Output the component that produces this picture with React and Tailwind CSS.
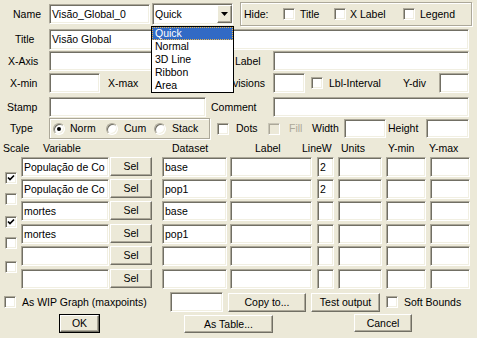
import React from "react";

const insetCls =
  "bg-white border border-t-[#aca899] border-l-[#aca899] border-b-white border-r-white shadow-[inset_1px_1px_0_#716f64,inset_-1px_-1px_0_#f1efe2] flex items-center pl-[2px] overflow-hidden whitespace-nowrap shrink-0";
const btnCls =
  "bg-[#ece9d8] border border-t-white border-l-white border-b-[#716f64] border-r-[#716f64] shadow-[inset_-1px_-1px_0_#aca899] flex items-center justify-center whitespace-nowrap shrink-0";

function Input({ className = "", children }) {
  return <div className={`${insetCls} ${className}`}>{children}</div>;
}

function Btn({ className = "", children }) {
  return <div className={`${btnCls} ${className}`}>{children}</div>;
}

function Check({ checked = false, disabled = false, className = "" }) {
  return (
    <div
      className={`w-[12px] h-[12px] shrink-0 border flex items-center justify-center ${
        disabled
          ? "bg-[#ece9d8] border-t-[#c9c6b7] border-l-[#c9c6b7] border-b-white border-r-white shadow-[inset_1px_1px_0_#aca899]"
          : "bg-white border-t-[#aca899] border-l-[#aca899] border-b-white border-r-white shadow-[inset_1px_1px_0_#716f64,inset_-1px_-1px_0_#f1efe2]"
      } ${className}`}
    >
      {checked && (
        <svg width="8" height="8" viewBox="0 0 8 8">
          <path d="M1 3.5 L3 5.6 L7 1.5" stroke="#000" strokeWidth="1.7" fill="none" />
        </svg>
      )}
    </div>
  );
}

function Radio({ checked = false, className = "" }) {
  return (
    <div
      className={`w-[12px] h-[12px] shrink-0 rounded-full border border-t-[#aca899] border-l-[#aca899] border-b-white border-r-white shadow-[inset_1px_1px_0_#716f64,inset_-1px_-1px_0_#f1efe2] bg-white flex items-center justify-center ${className}`}
    >
      {checked && <div className="w-[4px] h-[4px] rounded-full bg-black" />}
    </div>
  );
}

const groupCls =
  "border border-[#aca899] shadow-[inset_1px_1px_0_#ffffff,1px_1px_0_#ffffff] shrink-0";

const rows = [
  { v: "População de Co", d: "base", w: "2" },
  { v: "População de Co", d: "pop1", w: "2" },
  { v: "mortes", d: "base", w: "" },
  { v: "mortes", d: "pop1", w: "" },
  { v: "", d: "", w: "" },
  { v: "", d: "", w: "" },
];
const rowMt = ["mt-0", "mt-[2px]", "mt-[2px]", "mt-[3px]", "mt-[2px]", "mt-[3px]"];

export default function App() {
  return (
    <div className="relative w-[477px] h-[338px] overflow-hidden bg-[#ece9d8] text-black text-[10.5px] leading-[13px] font-['Liberation_Sans',Arial,sans-serif]">
      {/* Row A: Name */}
      <div className="flex items-center h-[24px] mt-[2px]">
        <div className="w-[49px] pl-[13px] shrink-0">Name</div>
        <Input className="w-[101px] h-[20px]">Visão_Global_0</Input>
        <div className={`${insetCls} ml-[2px] w-[81px] h-[22px] justify-between pr-0 pl-[2px]`}>
          <span>Quick</span>
          <Btn className="w-[15px] h-[18px]">
            <svg width="7" height="4" viewBox="0 0 7 4">
              <path d="M0 0 H7 L3.5 4 Z" fill="#000" />
            </svg>
          </Btn>
        </div>
        <div className={`${groupCls} ml-[7px] w-[232px] h-[24px] flex items-center`}>
          <div className="w-[42px] pl-[3px] shrink-0">Hide:</div>
          <Check />
          <div className="w-[39px] pl-[5px] shrink-0">Title</div>
          <Check />
          <div className="w-[57px] pl-[4px] shrink-0">X Label</div>
          <Check />
          <div className="pl-[5px]">Legend</div>
        </div>
      </div>

      {/* Row B: Title */}
      <div className="flex items-center h-[21px] mt-[3px]">
        <div className="w-[49px] pl-[15px] shrink-0">Title</div>
        <Input className="w-[420px] h-[21px]">Visão Global</Input>
      </div>

      {/* Row C: X-Axis */}
      <div className="flex items-center h-[20px] mt-[1px]">
        <div className="w-[49px] pl-[8px] shrink-0">X-Axis</div>
        <Input className="w-[171px] h-[20px]" />
        <div className="w-[53px] pl-[5px] shrink-0 whitespace-nowrap">X Label</div>
        <Input className="w-[196px] h-[20px]" />
      </div>

      {/* Row D: X-min */}
      <div className="flex items-center h-[20px] mt-[2px]">
        <div className="w-[49px] pl-[10px] shrink-0">X-min</div>
        <Input className="w-[51px] h-[20px]" />
        <div className="w-[52px] pl-[8px] shrink-0">X-max</div>
        <Input className="w-[53px] h-[20px]" />
        <div className="w-[68px] pr-[8px] text-right shrink-0 whitespace-nowrap">Y-divisions</div>
        <Input className="w-[32px] h-[20px]" />
        <Check className="ml-[6px]" />
        <div className="w-[80px] pl-[6px] shrink-0">Lbl-Interval</div>
        <div className="w-[36px] shrink-0">Y-div</div>
        <Input className="w-[30px] h-[20px]" />
      </div>

      {/* Row E: Stamp */}
      <div className="flex items-center h-[20px] mt-[4px]">
        <div className="w-[49px] pl-[7px] shrink-0">Stamp</div>
        <Input className="w-[157px] h-[20px]" />
        <div className="w-[67px] pl-[5px] shrink-0">Comment</div>
        <Input className="w-[196px] h-[20px]" />
      </div>

      {/* Row F: Type */}
      <div className="flex items-center h-[21px] mt-[1px]">
        <div className="w-[49px] pl-[10px] shrink-0">Type</div>
        <div className={`${groupCls} w-[161px] h-[21px] flex items-center`}>
          <Radio checked className="ml-[3px]" />
          <div className="w-[41px] pl-[5px] shrink-0">Norm</div>
          <Radio />
          <div className="w-[36px] pl-[6px] shrink-0">Cum</div>
          <Radio />
          <div className="pl-[6px]">Stack</div>
        </div>
        <Check className="ml-[7px]" />
        <div className="w-[39px] pl-[7px] shrink-0">Dots</div>
        <Check disabled />
        <div className="w-[32px] pl-[9px] shrink-0 text-[#aca899]">Fill</div>
        <div className="w-[32px] shrink-0">Width</div>
        <Input className="w-[42px] h-[19px]" />
        <div className="w-[40px] pl-[2px] shrink-0">Height</div>
        <Input className="w-[43px] h-[19px]" />
      </div>

      {/* Header */}
      <div className="flex items-center h-[18px]">
        <div className="w-[43px] pl-[3px] shrink-0">Scale</div>
        <div className="w-[129px] shrink-0">Variable</div>
        <div className="w-[83px] shrink-0">Dataset</div>
        <div className="w-[47px] shrink-0">Label</div>
        <div className="w-[39px] shrink-0">LineW</div>
        <div className="w-[47px] shrink-0">Units</div>
        <div className="w-[41px] shrink-0">Y-min</div>
        <div className="shrink-0">Y-max</div>
      </div>

      {/* Rows */}
      <div className="flex">
        <div className="w-[21px] flex flex-col shrink-0">
          <Check checked className="ml-[5px] mt-[15px]" />
          <Check className="ml-[5px] mt-[9px]" />
          <Check checked className="ml-[5px] mt-[11px]" />
          <Check className="ml-[5px] mt-[9px]" />
          <Check className="ml-[5px] mt-[12px]" />
        </div>
        <div className="flex flex-col">
          {rows.map((r, i) => (
            <div key={i} className={`flex items-start h-[20px] ${rowMt[i]}`}>
              <Input className="w-[88px] h-[20px]">{r.v}</Input>
              <Btn className="ml-[1px] w-[42px] h-[19px]">Sel</Btn>
              <Input className="ml-[10px] w-[65px] h-[20px]">{r.d}</Input>
              <Input className="ml-[3px] w-[82px] h-[20px]" />
              <Input className="ml-[5px] w-[17px] h-[20px]">{r.w}</Input>
              <Input className="ml-[4px] w-[44px] h-[20px]" />
              <Input className="ml-[4px] w-[40px] h-[20px]" />
              <Input className="ml-[4px] w-[40px] h-[20px]" />
            </div>
          ))}
        </div>
      </div>

      {/* WIP row */}
      <div className="flex items-center h-[20px] mt-[3px]">
        <Check className="ml-[4px]" />
        <div className="w-[154px] pl-[6px] shrink-0">As WIP Graph (maxpoints)</div>
        <Input className="w-[53px] h-[20px]" />
        <Btn className="ml-[5px] w-[78px] h-[19px]">Copy to...</Btn>
        <Btn className="ml-[5px] w-[69px] h-[19px]">Test output</Btn>
        <Check className="ml-[6px]" />
        <div className="pl-[6px]">Soft Bounds</div>
      </div>

      {/* Buttons */}
      <div className="flex items-start h-[19px] mt-[2px]">
        <div className="ml-[59px] w-[41px] h-[19px] border border-black shrink-0 flex">
          <Btn className="w-full h-full">OK</Btn>
        </div>
        <Btn className="ml-[84px] mt-[1px] w-[89px] h-[18px]">As Table...</Btn>
        <Btn className="ml-[81px] w-[58px] h-[18px]">Cancel</Btn>
      </div>

      {/* Dropdown list overlay */}
      <div className="absolute left-[151px] top-[26px] w-[83px] h-[67px] bg-white border border-black flex flex-col">
        <div className="h-[13px] bg-[#316ac5] text-white border border-dotted border-[#e9b64a] pl-[2px] flex items-center">Quick</div>
        <div className="h-[13px] border border-transparent pl-[2px] flex items-center">Normal</div>
        <div className="h-[13px] border border-transparent pl-[2px] flex items-center">3D Line</div>
        <div className="h-[13px] border border-transparent pl-[2px] flex items-center">Ribbon</div>
        <div className="h-[13px] border border-transparent pl-[2px] flex items-center">Area</div>
      </div>
    </div>
  );
}
